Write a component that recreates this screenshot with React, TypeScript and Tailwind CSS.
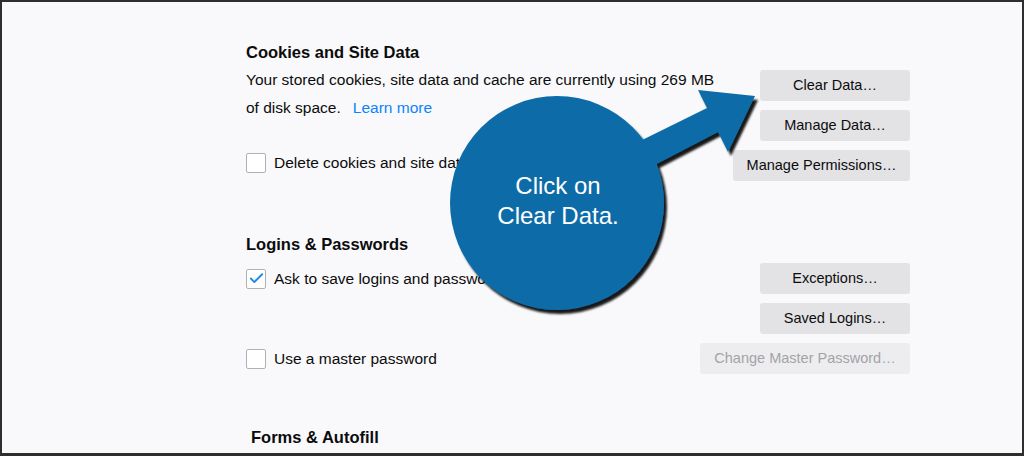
import { Check } from 'lucide-react'

const font = { fontFamily: '"Liberation Sans", Arial, sans-serif' }

function Checkbox({ checked = false }: { checked?: boolean }) {
  return (
    <span className="flex h-[20px] w-[20px] shrink-0 items-center justify-center rounded-[2px] border border-[#b1b1b3] bg-white">
      {checked && <Check size={17} strokeWidth={2.6} className="text-[#1a88ec]" />}
    </span>
  )
}

function Button({ label, disabled = false, wide = false }: { label: string; disabled?: boolean; wide?: boolean }) {
  return (
    <button
      className={`h-[31px] rounded-[3px] text-[14.5px] ${wide ? 'w-[177px]' : 'w-[150px]'} ${
        disabled ? 'bg-[#ededf0] text-[#a3a3a6]' : 'bg-[#e3e3e6] text-[#0c0c0d]'
      }`}
    >
      {label}
    </button>
  )
}

function Callout() {
  return (
    <svg className="pointer-events-none absolute -left-[2px] -top-[2px]" width="1024" height="456">
      <defs>
        <filter id="shadow" x="-20%" y="-20%" width="140%" height="140%">
          <feDropShadow dx="3" dy="4" stdDeviation="1.2" floodColor="#000" floodOpacity="0.9" />
        </filter>
      </defs>
      <g filter="url(#shadow)" fill="#0a6ca8">
        <polygon points="630,146 707,108 698,90 755,96 728,152 718,132 645,170" />
        <circle cx="557" cy="203" r="107" />
      </g>
      <g fill="#ffffff" fontSize="24" textAnchor="middle" style={font}>
        <text x="558" y="194">Click on</text>
        <text x="558" y="224">Clear Data.</text>
      </g>
    </svg>
  )
}

export default function App() {
  return (
    <div
      className="relative h-[456px] w-[1024px] overflow-hidden border-2 border-b-[3px] border-[#2e2e2e] bg-[#f9f9fb] text-[#0c0c0d]"
      style={font}
    >
      <div className="w-[908px] pl-[244px]">
        {/* Cookies and Site Data */}
        <section className="pt-[39px]">
          <h2 className="text-[16.5px] font-bold leading-[22px]">Cookies and Site Data</h2>
          <div className="mt-[3px] flex justify-between">
            <div className="w-[478px]">
              <p className="text-[15.5px] leading-[28px]">
                Your stored cookies, site data and cache are currently using 269 MB of disk space.
                <a className="ml-[12px] text-[#0a84ff]">Learn more</a>
              </p>
              <label className="mt-[29px] flex items-center gap-[8px] text-[15.5px]">
                <Checkbox />
                Delete cookies and site data when Firefox is closed
              </label>
            </div>
            <div className="mt-[4px] flex flex-col items-end gap-[9px]">
              <Button label="Clear Data…" />
              <Button label="Manage Data…" />
              <Button label="Manage Permissions…" wide />
            </div>
          </div>
        </section>

        {/* Logins & Passwords */}
        <section className="mt-[52px]">
          <h2 className="text-[16.5px] font-bold leading-[22px]">Logins &amp; Passwords</h2>
          <div className="mt-[8px] flex flex-col gap-[9px]">
            <div className="flex items-center justify-between">
              <label className="flex items-center gap-[8px] text-[15.5px]">
                <Checkbox checked />
                Ask to save logins and passwords for websites
              </label>
              <Button label="Exceptions…" />
            </div>
            <div className="flex justify-end">
              <Button label="Saved Logins…" />
            </div>
            <div className="flex items-center justify-between">
              <label className="flex items-center gap-[8px] text-[15.5px]">
                <Checkbox />
                Use a master password
              </label>
              <span className="w-[210px]">
                <button className="h-[31px] w-full rounded-[3px] bg-[#ededf0] text-[14.5px] text-[#a3a3a6]">
                  Change Master Password…
                </button>
              </span>
            </div>
          </div>
        </section>

        {/* Forms & Autofill */}
        <section className="mt-[52px] pl-[5px]">
          <h2 className="text-[16.5px] font-bold leading-[22px]">Forms &amp; Autofill</h2>
        </section>
      </div>
      <Callout />
    </div>
  )
}
